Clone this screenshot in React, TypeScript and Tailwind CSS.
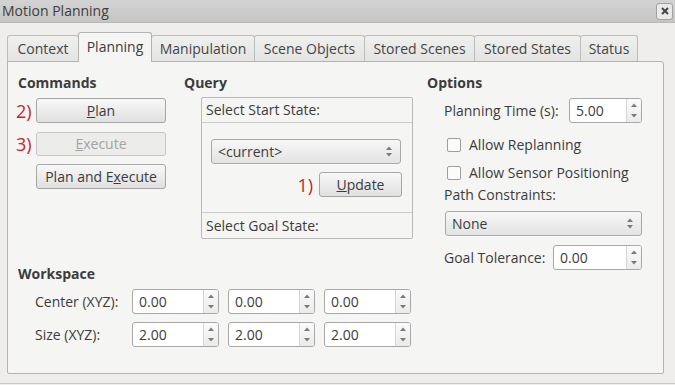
import React from 'react'

const tabs = [
    { label: 'Context', w: 'w-[72px]' },
    { label: 'Planning', w: 'w-[74px]', active: true },
    { label: 'Manipulation', w: 'w-[104px]' },
    { label: 'Scene Objects', w: 'w-[111px]' },
    { label: 'Stored Scenes', w: 'w-[111px]' },
    { label: 'Stored States', w: 'w-[107px]' },
    { label: 'Status', w: 'w-[58px]' },
]

function Arrows({ gap }: { gap: string }) {
    return (
        <div className={`flex flex-col items-center ${gap}`}>
            <svg width="6" height="4" viewBox="0 0 6 4">
                <path d="M0 4 L3 0.5 L6 4 Z" fill="#7a7a7a" />
            </svg>
            <svg width="6" height="4" viewBox="0 0 6 4">
                <path d="M0 0 L3 3.5 L6 0 Z" fill="#7a7a7a" />
            </svg>
        </div>
    )
}

function SpinBox({ value, w }: { value: string; w: string }) {
    return (
        <div className={`flex h-[25px] ${w} overflow-hidden rounded-[3px] border border-[#a8a8a8] bg-white`}>
            <div className="flex flex-1 items-center pl-[6px] text-[#3c3c3c]">{value}</div>
            <div className="flex w-[15px] items-center justify-center border-l border-[#d6d6d6] bg-linear-to-b from-[#fbfbfb] to-[#ebebeb]">
                <Arrows gap="gap-[7px]" />
            </div>
        </div>
    )
}

function Combo({ value, w }: { value: string; w: string }) {
    return (
        <div className={`flex h-[25px] ${w} items-center justify-between rounded-[3px] border border-[#a8a8a8] bg-linear-to-b from-[#f7f7f7] to-[#e3e3e3] pl-[6px] pr-[8px] text-[#3c3c3c] shadow-[0_1px_0_rgba(255,255,255,0.8)]`}>
            <span>{value}</span>
            <Arrows gap="gap-[3px]" />
        </div>
    )
}

function Button({ children, w, disabled }: { children: React.ReactNode; w: string; disabled?: boolean }) {
    return (
        <div
            className={
                disabled
                    ? `flex h-[24px] ${w} items-center justify-center rounded-[3px] border border-[#c6c6c6] bg-[#ececeb] text-[#a3a3a3]`
                    : `flex h-[25px] ${w} items-center justify-center rounded-[3px] border border-[#a6a6a6] bg-linear-to-b from-[#f8f8f8] to-[#e0e0e0] text-[#3c3c3c]`
            }
        >
            {children}
        </div>
    )
}

function Check({ label }: { label: string }) {
    return (
        <div className="flex h-[20px] items-center gap-[8px] pl-[20px]">
            <div className="h-[14px] w-[14px] rounded-[2px] border border-[#9e9e9e] bg-[#fbfbfb]" />
            <span className="text-[#3c3c3c]">{label}</span>
        </div>
    )
}

export default function App() {
    return (
        <div className="flex h-[385px] w-[675px] flex-col overflow-hidden bg-[#efeeed] font-['Open_Sans',sans-serif] text-[14px] leading-[18px] text-[#3c3c3c]">
            {/* Title bar */}
            <div className="flex h-[23px] shrink-0 items-center justify-between border-b border-[#b8b8b8] bg-linear-to-b from-[#d3d3d3] to-[#c5c5c5] pl-[2px] pr-[2px]">
                <span className="text-[#3d3d3d]">Motion Planning</span>
                <div className="flex h-[17px] w-[17px] items-center justify-center rounded-[3px] border border-[#a0a0a0] bg-[#e9e9e9]">
                    <svg width="8" height="8" viewBox="0 0 8 8">
                        <path d="M1 1 L7 7 M7 1 L1 7" stroke="#444" strokeWidth="2" />
                    </svg>
                </div>
            </div>

            {/* Tabs */}
            <div className="mt-[9px] flex h-[29px] shrink-0 items-end pl-[7px]">
                {tabs.map((tab, i) => (
                    <div
                        key={tab.label}
                        className={
                            tab.active
                                ? `relative z-10 -mb-px flex h-[30px] ${tab.w} ${i ? '-ml-px' : ''} items-center justify-center rounded-t-[3px] border border-b-0 border-[#b3b3b3] bg-[#f5f5f4] pb-[2px]`
                                : `flex h-[26px] ${tab.w} ${i ? '-ml-px' : ''} items-center justify-center rounded-t-[3px] border border-b-0 border-[#bcbcbc] bg-linear-to-b from-[#efefee] to-[#e4e4e3] text-[#454545]`
                        }
                    >
                        {tab.label}
                    </div>
                ))}
            </div>

            {/* Panel */}
            <div className="ml-[7px] flex h-[313px] w-[657px] shrink-0 rounded-b-[2px] rounded-tr-[3px] border border-[#b3b3b3] bg-[#f5f5f4] pl-[8px] pt-[12px]">
                {/* Left side */}
                <div className="flex w-[397px] flex-col">
                    <div className="flex">
                        {/* Commands */}
                        <div className="flex w-[168px] flex-col">
                            <div className="ml-[2px] font-bold">Commands</div>
                            <div className="mt-[6px] flex items-center">
                                <span className="w-[20px] text-[18px] leading-[20px] text-[#c1272d]">2)</span>
                                <Button w="w-[130px]"><span><u>P</u>lan</span></Button>
                            </div>
                            <div className="mt-[9px] flex items-center">
                                <span className="w-[20px] text-[18px] leading-[20px] text-[#c1272d]">3)</span>
                                <Button w="w-[130px]" disabled><span><u>E</u>xecute</span></Button>
                            </div>
                            <div className="mt-[8px] flex items-center">
                                <span className="w-[20px]" />
                                <Button w="w-[130px]"><span>Plan and E<u>x</u>ecute</span></Button>
                            </div>
                        </div>

                        {/* Query */}
                        <div className="flex flex-col">
                            <div className="font-bold">Query</div>
                            <div className="ml-[17px] mt-[5px] flex h-[142px] w-[212px] flex-col rounded-[2px] border border-[#b9b9b9]">
                                <div className="flex h-[25px] items-center border-b border-[#cbcbcb] pl-[4px]">Select Start State:</div>
                                <div className="flex flex-1 flex-col pl-[9px] pr-[10px] pt-[16px]">
                                    <Combo value="<current>" w="w-[190px]" />
                                    <div className="mt-[8px] flex items-center justify-end gap-[6px]">
                                        <span className="text-[18px] leading-[20px] text-[#c1272d]">1)</span>
                                        <Button w="w-[83px]"><span><u>U</u>pdate</span></Button>
                                    </div>
                                </div>
                                <div className="flex h-[26px] items-center border-t border-[#cbcbcb] pl-[4px]">Select Goal State:</div>
                            </div>
                        </div>
                    </div>

                    {/* Workspace */}
                    <div className="ml-[2px] mt-[26px] font-bold">Workspace</div>
                    <div className="mt-[6px] flex items-center pl-[19px]">
                        <span className="w-[97px]">Center (XYZ):</span>
                        <div className="flex gap-[9px]">
                            <SpinBox value="0.00" w="w-[87px]" />
                            <SpinBox value="0.00" w="w-[87px]" />
                            <SpinBox value="0.00" w="w-[87px]" />
                        </div>
                    </div>
                    <div className="mt-[8px] flex items-center pl-[19px]">
                        <span className="w-[97px]">Size (XYZ):</span>
                        <div className="flex gap-[9px]">
                            <SpinBox value="2.00" w="w-[87px]" />
                            <SpinBox value="2.00" w="w-[87px]" />
                            <SpinBox value="2.00" w="w-[87px]" />
                        </div>
                    </div>
                </div>

                {/* Options */}
                <div className="ml-[14px] flex w-[215px] flex-col">
                    <div className="font-bold">Options</div>
                    <div className="mt-[6px] flex items-center justify-between pl-[17px]">
                        <span>Planning Time (s):</span>
                        <SpinBox value="5.00" w="w-[73px]" />
                    </div>
                    <div className="mt-[12px]">
                        <Check label="Allow Replanning" />
                    </div>
                    <div className="mt-[8px]">
                        <Check label="Allow Sensor Positioning" />
                    </div>
                    <div className="mt-[3px] pl-[17px]">Path Constraints:</div>
                    <div className="mt-[7px] pl-[18px]">
                        <Combo value="None" w="w-[197px]" />
                    </div>
                    <div className="mt-[9px] flex items-center justify-between pl-[17px]">
                        <span>Goal Tolerance:</span>
                        <SpinBox value="0.00" w="w-[89px]" />
                    </div>
                </div>
            </div>

            <div className="mt-[9px] h-px w-full bg-[#c9c9c9]" />
        </div>
    )
}
